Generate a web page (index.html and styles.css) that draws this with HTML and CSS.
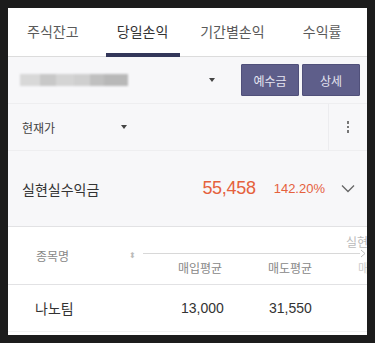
FILE: index.html
```html
<!DOCTYPE html>
<html lang="ko">
<head>
<meta charset="utf-8">
<link rel="stylesheet" href="styles.css">
</head>
<body>
<div class="app">
  <nav class="tabs">
    <div class="tab">주식잔고</div>
    <div class="tab active">당일손익</div>
    <div class="tab">기간별손익</div>
    <div class="tab">수익률</div>
  </nav>
  <div class="account-row">
    <div class="account">
      <span class="blur b1"></span><span class="blur b2"></span><span class="blur b3"></span><span class="blur b4"></span><span class="blur b5"></span><span class="blur b6"></span>
    </div>
    <span class="caret account-caret"></span>
    <div class="btns">
      <button class="btn">예수금</button>
      <button class="btn">상세</button>
    </div>
  </div>
  <div class="price-row">
    <div class="price-sel">현재가<span class="caret price-caret"></span></div>
    <div class="more"><span></span><span></span><span></span></div>
  </div>
  <div class="summary">
    <div class="sum-label">실현실수익금</div>
    <div class="sum-amt">55,458</div>
    <div class="sum-pct">142.20%</div>
    <svg class="chev" width="14" height="9" viewBox="0 0 14 9"><path d="M1 1.5 L7 7.5 L13 1.5" fill="none" stroke="#666" stroke-width="1.3"/></svg>
  </div>
  <div class="thead">
    <div class="th-name">종목명<span class="sort">⬍</span></div>
    <div class="th-right">
      <div class="th-top">실현손</div>
      <div class="th-line"><span></span><svg width="7" height="9" viewBox="0 0 7 9"><path d="M1 1 L5 4.5 L1 8" fill="none" stroke="#bbb" stroke-width="1"/></svg></div>
      <div class="th-sub"><span class="c1">매입평균</span><span class="c2">매도평균</span><span class="c3">매</span></div>
    </div>
  </div>
  <div class="trow">
    <div class="td-name">나노팀</div>
    <div class="td c1">13,000</div>
    <div class="td c2">31,550</div>
  </div>
</div>
</body>
</html>
```
FILE: styles.css
```css
html { background: #1c1c1c; }
body {
  margin: 8px;
  font-family: "Liberation Sans", "Noto Sans CJK KR", sans-serif;
}
.app {
  background: #fff;
  height: 327px;
  overflow: hidden;
}
.tabs {
  display: flex;
  height: 48px;
  border-bottom: 1px solid #dcdcdc;
  background: #fff;
}
.tab {
  flex: 1;
  display: flex;
  align-items: center;
  justify-content: center;
  font-size: 14px;
  color: #5a5a5a;
  position: relative;
  padding-bottom: 2px;
}
.tab.active { color: #333; }
.tab.active::after {
  content: "";
  position: absolute;
  left: 8px;
  right: 8px;
  bottom: -1px;
  height: 4px;
  background: #33375a;
}
.account-row {
  display: flex;
  align-items: center;
  height: 46px;
  background: #f7f7f9;
  border-bottom: 1px solid #eeeef0;
  padding: 0 7px 0 12px;
}
.account {
  display: flex;
  height: 12px;
  filter: blur(1.2px);
  width: 108px;
}
.blur { display: block; height: 12px; }
.b1 { width: 20px; background: #d8d8d8; }
.b2 { width: 16px; background: #c8c8c8; }
.b3 { width: 18px; background: #d4d4d4; }
.b4 { width: 16px; background: #cfcfcf; }
.b5 { width: 14px; background: #c0c0c0; }
.b6 { width: 24px; background: #b8b8b8; }
.caret {
  display: inline-block;
  width: 0;
  height: 0;
  border-left: 3.5px solid transparent;
  border-right: 3.5px solid transparent;
  border-top: 4px solid #444;
}
.account-caret { margin-left: 81px; }
.btns {
  margin-left: auto;
  display: flex;
  gap: 3px;
}
.btn {
  width: 58px;
  height: 32px;
  border: 1px solid #50507a;
  background: #5e5e8a;
  color: #e4e4f0;
  font-family: "Noto Sans CJK KR", sans-serif;
  font-size: 12px;
  padding: 0;
  border-radius: 1px;
}
.price-row {
  display: flex;
  height: 46px;
  background: #f7f7f9;
  border-bottom: 1px solid #eeeef0;
}
.price-sel {
  flex: 1;
  display: flex;
  align-items: center;
  padding-left: 14px;
  font-size: 12px;
  color: #444;
  border-right: 1px solid #ececef;
}
.price-caret { margin-left: 66px; }
.more {
  width: 38px;
  display: flex;
  flex-direction: column;
  align-items: center;
  justify-content: center;
  gap: 2px;
}
.more span {
  width: 2.5px;
  height: 2.5px;
  background: #777;
}
.summary {
  display: flex;
  align-items: center;
  height: 75px;
  background: #f7f7f9;
  border-bottom: 1px solid #e2e2e4;
  padding: 0 12px 0 14px;
}
.sum-label {
  font-size: 14px;
  color: #333;
  font-weight: normal;
  flex: 1;
}
.sum-amt {
  font-size: 18px;
  color: #e5613d;
  letter-spacing: -0.3px;
}
.sum-pct {
  font-size: 13px;
  color: #e5613d;
  margin-left: 18px;
}
.chev { margin-left: 16px; }
.thead {
  display: flex;
  height: 57px;
  border-bottom: 1px solid #e2e2e4;
}
.th-name {
  width: 133px;
  display: flex;
  align-items: center;
  padding-left: 28px;
  box-sizing: border-box;
  font-size: 12px;
  color: #888;
}
.sort {
  font-size: 8px;
  color: #bbb;
  margin-left: 60px;
}
.th-right {
  flex: 1;
  display: flex;
  flex-direction: column;
  padding-top: 6px;
}
.th-top {
  align-self: flex-end;
  font-size: 12px;
  color: #bbb;
  margin-right: -12px;
  height: 14px;
}
.th-line {
  display: flex;
  align-items: center;
  padding-left: 2px;
  height: 12px;
}
.th-line span {
  flex: 1;
  height: 1px;
  background: #d8d8d8;
}
.th-sub {
  position: relative;
  font-size: 12px;
  color: #888;
  height: 16px;
}
.th-sub span, .trow .td { position: absolute; }
.th-sub .c1 { left: 37px; }
.th-sub .c2 { left: 127px; }
.th-sub .c3 { left: 217px; color: #ccc; }
.trow {
  position: relative;
  display: flex;
  align-items: center;
  height: 46px;
  border-bottom: 1px solid #f2f2f2;
}
.td-name {
  padding-left: 27px;
  font-size: 14px;
  color: #333;
}
.trow .td {
  font-size: 14px;
  color: #333;
}
.trow .c1 { left: 173px; }
.trow .c2 { left: 261px; }
```
